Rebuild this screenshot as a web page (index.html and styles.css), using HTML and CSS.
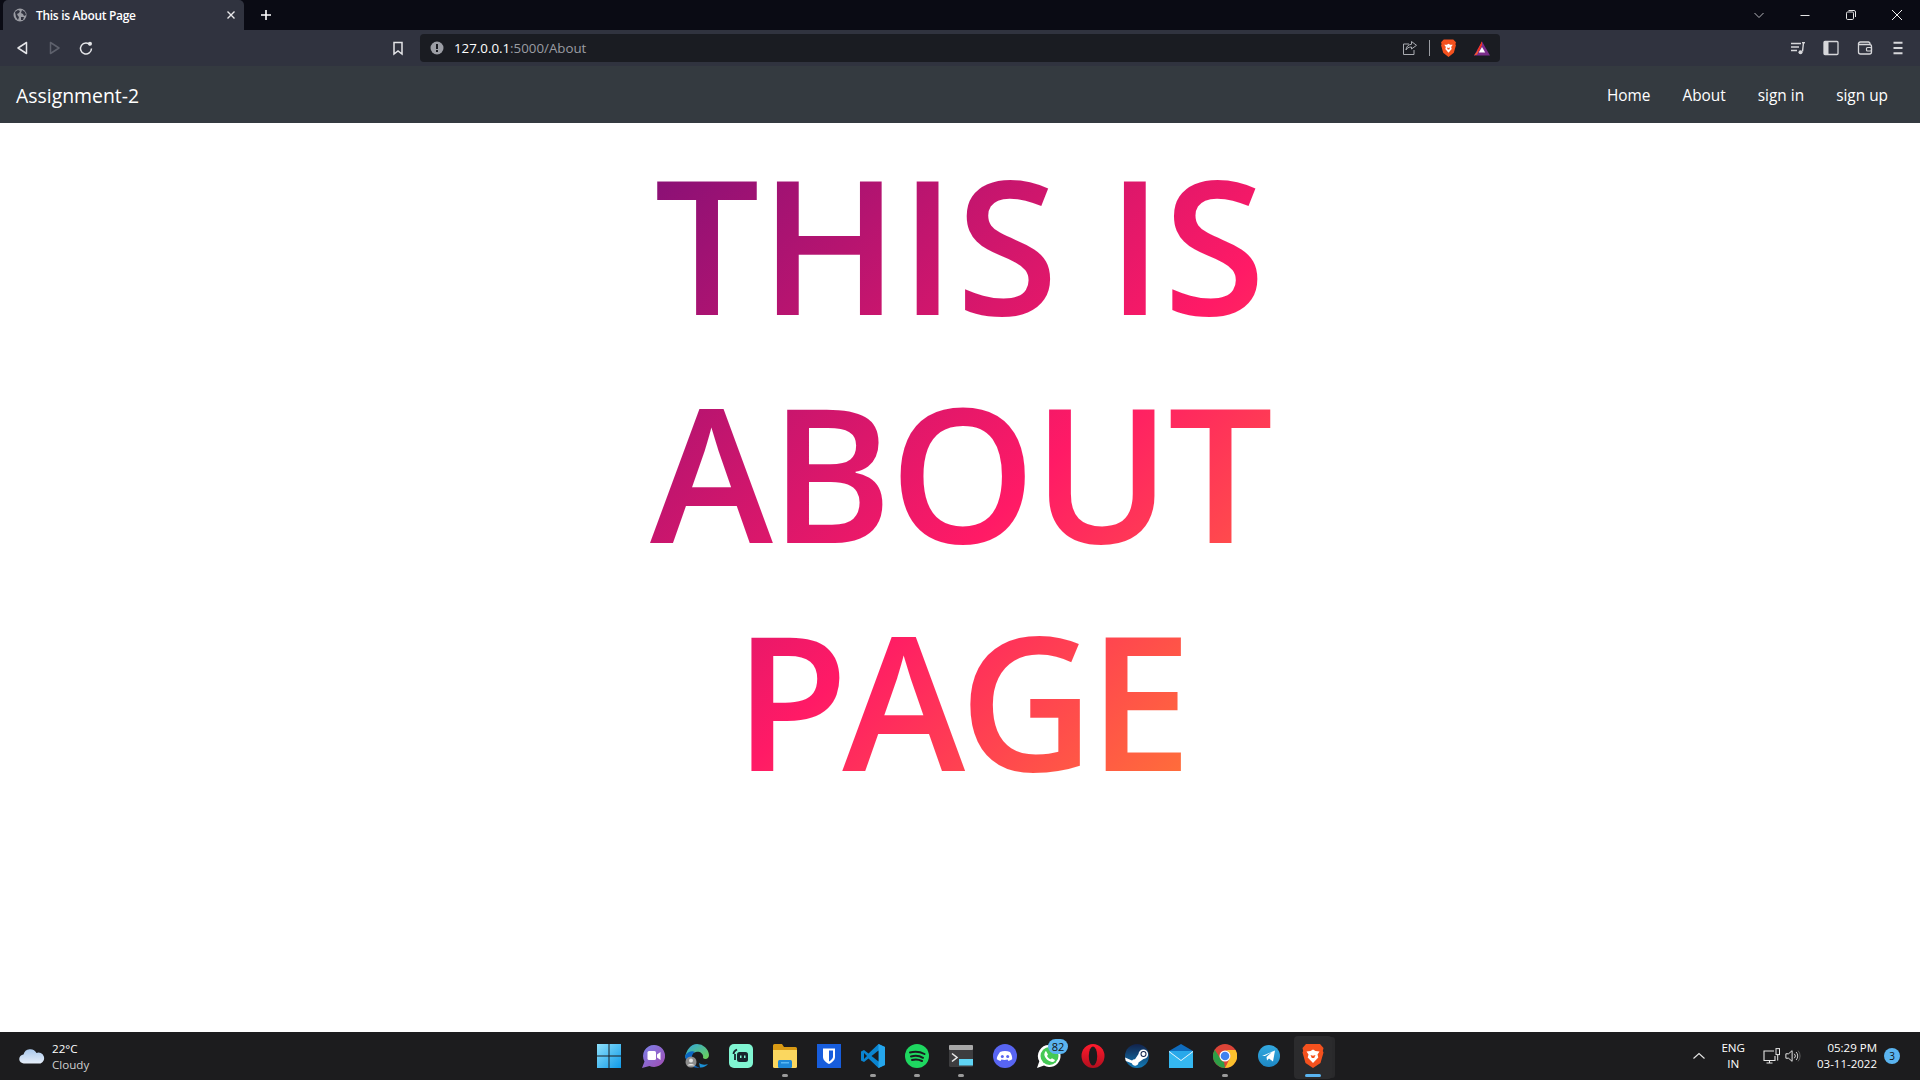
FILE: index.html
```html
<!DOCTYPE html>
<html lang="en">
<head>
<meta charset="utf-8">
<title>This is About Page</title>
<link rel="stylesheet" href="styles.css">
</head>
<body>
<header class="tabstrip">
  <div class="tab">
    <svg class="tab-globe" viewBox="0 0 14 14"><circle cx="7" cy="7" r="6.500" fill="#9a9ca3"/><path d="M2 4l3-2 2 1-1 2-2 1 1 2 1 1-1 3-2-3zM9 2l3 2 1 3-2 1-1-2-2-1zM8 9l3 0-1 3-2 0z" fill="#30333f"/></svg>
    <span class="tab-title">This is About Page</span>
    <svg class="tab-close" viewBox="0 0 10 10"><path d="M1.500 1.500l7 7M8.500 1.500l-7 7" stroke="#e8e8ea" stroke-width="1.400"/></svg>
  </div>
  <svg class="tab-new" viewBox="0 0 12 12"><path d="M6 1v10M1 6h10" stroke="#fff" stroke-width="1.600"/></svg>
  <div class="win-controls">
    <svg class="win-icon chev" viewBox="0 0 12 12"><path d="M1.500 4l4.500 4.500L10.500 4" fill="none" stroke="#b5b6bb"/></svg>
    <svg class="win-icon" viewBox="0 0 12 12"><path d="M1.500 6.500h9" stroke="#e5e5e5" stroke-width="1"/></svg>
    <svg class="win-icon" viewBox="0 0 12 12"><rect x="1.500" y="3" width="7" height="7.500" rx="1.200" fill="none" stroke="#e5e5e5"/><path d="M3.500 1.500h5.500a1.500 1.500 0 0 1 1.500 1.500v5" fill="none" stroke="#e5e5e5"/></svg>
    <svg class="win-icon" viewBox="0 0 12 12"><path d="M1 1l10 10M11 1L1 11" stroke="#f0f0f0"/></svg>
  </div>
</header>

<div class="toolbar">
  <svg class="tool-icon back" viewBox="0 0 16 16"><path d="M11.500 2.500v11L3 8z" fill="none" stroke="#e4e5e8" stroke-width="1.500" stroke-linejoin="round"/></svg>
  <svg class="tool-icon fwd" viewBox="0 0 16 16"><path d="M4.500 2.500v11L13 8z" fill="none" stroke="#5e616c" stroke-width="1.500" stroke-linejoin="round"/></svg>
  <svg class="tool-icon reload" viewBox="0 0 16 16"><path d="M12.300 5A5.500 5.500 0 1 0 13.500 8.500" fill="none" stroke="#e4e5e8" stroke-width="1.500"/><circle cx="12" cy="3.800" r="2" fill="#e4e5e8"/></svg>
  <svg class="tool-icon bookmark" viewBox="0 0 16 16"><path d="M4 2.500h8v11.500l-4-3-4 3z" fill="none" stroke="#e4e5e8" stroke-width="1.500"/></svg>
  <div class="omnibox">
    <svg class="alert" viewBox="0 0 14 14"><circle cx="7" cy="7" r="6.500" fill="#9c9ea5"/><rect x="6" y="3" width="2" height="5" fill="#1a1c22"/><rect x="6" y="9" width="2" height="2" fill="#1a1c22"/></svg>
    <span class="url"><b>127.0.0.1</b>:5000/About</span>
    <svg class="share" viewBox="0 0 16 16"><path d="M7 4H1.500v10.500H12V10" fill="none" stroke="#a9abb1"/><path d="M9.500 1.500l5 3.800-5 3.700V7c-3 0-4.500 1-5.500 3 .2-3.500 2.500-5.500 5.500-5.700z" fill="none" stroke="#a9abb1"/></svg>
    <i class="sep"></i>
    <svg class="brave" viewBox="0 0 16 18"><path d="M3.500 1h9l2.500 2.500-.5 2 .5 1-2 7L8 17.500 3 13.500 1 6.500l.5-1L1 3.500z" fill="#f4511e"/><path d="M4 6l2.500 0L8 5l1.500 1L12 6l-1.500 2 .5 2-3 3.500L5 10l.5-2z" fill="#fff"/><path d="M6.500 8.500l1.500.5 1.500-.5L8.700 10.500h-1.400z" fill="#f4511e"/></svg>
    <svg class="bat" viewBox="0 0 16 14"><path d="M8 0l8 14H0z" fill="#7b2d8b"/><path d="M8 0L3.500 9.500 0 14l3-1 5-10z" fill="#ff5a22"/><path d="M8 0l-5 9.500h2L8 3z" fill="#f4331c"/><path d="M8 5.500L4.800 11h6.400z" fill="#fff"/></svg>
  </div>
  <div class="tool-right">
    <svg class="tool-icon" viewBox="0 0 16 16"><path d="M1 3.500h10M1 7h8M1 10.500h6" stroke="#d6d7da" stroke-width="1.400"/><path d="M13.500 2.500l-1 9" stroke="#d6d7da" stroke-width="1.400"/><path d="M12 2.700h3" stroke="#d6d7da" stroke-width="1.400"/><circle cx="10.500" cy="12.200" r="2" fill="#d6d7da"/></svg>
    <svg class="tool-icon" viewBox="0 0 16 16"><rect x="1" y="1.500" width="14" height="13" rx="1" fill="none" stroke="#d6d7da" stroke-width="1.300"/><rect x="1" y="1.500" width="4.500" height="13" fill="#d6d7da"/></svg>
    <svg class="tool-icon" viewBox="0 0 16 16"><path d="M1.500 4.500V12a2 2 0 0 0 2 2h9a2 2 0 0 0 2-2V6.500a2 2 0 0 0-2-2h-11zM1.500 4.500a2 2 0 0 1 2-2.500h8a2 2 0 0 1 1.500 2.500" fill="none" stroke="#d6d7da" stroke-width="1.300"/><rect x="9.500" y="7.500" width="5" height="3.500" rx="1" fill="none" stroke="#d6d7da" stroke-width="1.200"/></svg>
    <svg class="tool-icon" viewBox="0 0 16 16"><path d="M3.500 2.800h9M3.500 8h9M3.500 13.200h9" stroke="#d6d7da" stroke-width="2"/></svg>
  </div>
</div>

<nav class="navbar">
  <a class="brand">Assignment-2</a>
  <ul class="nav-links">
    <li>Home</li>
    <li>About</li>
    <li>sign in</li>
    <li>sign up</li>
  </ul>
</nav>

<main class="page">
  <h1 class="headline"><span class="line line-a">THIS IS</span> <span class="line line-b">ABOUT</span> <span class="line line-c">PAGE</span></h1>
</main>

<footer class="taskbar">
  <div class="weather">
    <svg class="cloud" viewBox="0 0 26 18"><defs><linearGradient id="cl" x1="0" y1="0" x2="0" y2="1"><stop offset="0" stop-color="#a9c8ec"/><stop offset="1" stop-color="#e6eef9"/></linearGradient></defs><path d="M5 16.500a4.500 4.500 0 0 1-.5-9A7 7 0 0 1 17.500 6a5.300 5.300 0 0 1 4 10.500z" fill="url(#cl)"/></svg>
    <div class="weather-text"><span class="temp">22°C</span><span class="cond">Cloudy</span></div>
  </div>

  <div class="apps">
    <div class="app"><svg viewBox="0 0 24 24"><defs><linearGradient id="win" x1="0" y1="0" x2="1" y2="1"><stop offset="0" stop-color="#8ee0fb"/><stop offset="1" stop-color="#0f9ae8"/></linearGradient></defs><path d="M0 0h11.500v11.500H0zM12.500 0H24v11.500H12.500zM0 12.500h11.500V24H0zM12.500 12.500H24V24H12.500z" fill="url(#win)"/></svg></div>
    <div class="app"><svg viewBox="0 0 24 24"><defs><linearGradient id="chat" x1="0" y1="0" x2="1" y2="1"><stop offset="0" stop-color="#7b83eb"/><stop offset="1" stop-color="#a24bb0"/></linearGradient></defs><path d="M13 1a11 11 0 1 1-4.500 21L1 24l2.500-6.500A11 11 0 0 1 13 1z" fill="url(#chat)"/><rect x="6.500" y="7" width="8.500" height="9" rx="1.500" fill="#fff"/><path d="M16 10.500l3.500-2.500v8l-3.500-2.500z" fill="#fff"/></svg></div>
    <div class="app"><svg viewBox="0 0 24 24"><defs><linearGradient id="edge1" x1="0" y1="0" x2="1" y2="1"><stop offset="0" stop-color="#2fa5e0"/><stop offset="1" stop-color="#6fd24f"/></linearGradient></defs><path d="M12 0a12 12 0 0 1 12 11c0 4-4 5-6 3 1-4-3-7-7-6-4 1-8 4-11 6C1 6 6 0 12 0z" fill="url(#edge1)"/><path d="M0 12c2-4 7-6 10-4-2 1-4 4-3 8 .7 4 4 7 8 7.500C8 25 1 20 0 12z" fill="#0b66c2"/><path d="M15 23.500c3 .5 6-1 8-3.500-3 1-6 1-9-1z" fill="#1a8fd6"/><circle cx="6" cy="18" r="5.500" fill="#8d8d8d"/><circle cx="6" cy="16.500" r="2" fill="#e2e2e2"/><path d="M2.500 21.500c.7-2 6.300-2 7 0z" fill="#e2e2e2"/></svg></div>
    <div class="app"><svg viewBox="0 0 24 24"><rect width="24" height="24" rx="5" fill="#80f5d2"/><rect x="8" y="8" width="11" height="10" rx="2.500" fill="#17242d"/><path d="M4.500 10c0-2 1.500-3.500 3.500-4.500" fill="none" stroke="#17242d" stroke-width="1.800"/><path d="M6 10v6" stroke="#17242d" stroke-width="1.800"/><rect x="11" y="11.500" width="1.500" height="2.500" fill="#80f5d2"/><rect x="15" y="11.500" width="1.500" height="2.500" fill="#80f5d2"/></svg></div>
    <div class="app running"><svg viewBox="0 0 24 24"><path d="M0 1.500A1.500 1.500 0 0 1 1.500 0H9l2 3h11.500A1.500 1.500 0 0 1 24 4.500V8H0z" fill="#d99a14"/><path d="M0 6h24v16.500a1.500 1.500 0 0 1-1.500 1.500h-21A1.500 1.500 0 0 1 0 22.500z" fill="#fbd75f"/><rect x="5" y="16" width="14" height="8" rx="1.500" fill="#1e88d6"/><rect x="8" y="18" width="8" height="1.500" fill="#57b7f2"/></svg></div>
    <div class="app"><svg viewBox="0 0 24 24"><rect width="24" height="24" fill="#175ddc"/><path d="M6 4.500h12v8.500c0 3-3 5.500-6 7-3-1.500-6-4-6-7z" fill="#fff"/><path d="M12 6.500h4v6.300c0 1.800-2 3.400-4 4.600z" fill="#175ddc"/></svg></div>
    <div class="app running"><svg viewBox="0 0 24 24"><path d="M17.500 0L24 3v18l-6.500 3L7.500 14.500 3 18l-3-1.500v-9L3 6l4.500 3.500z" fill="#0a84d0"/><path d="M17.500 0L24 3v18l-6.500 3z" fill="#25a6ec"/><path d="M17.500 6.500v11L10.500 12z" fill="#1a1c1f"/><path d="M3 9l3 3-3 3z" fill="#1a1c1f"/></svg></div>
    <div class="app running"><svg viewBox="0 0 24 24"><circle cx="12" cy="12" r="12" fill="#1ed760"/><path d="M5 8.500c5-1.500 10-1 14.500 1.500M6 12.500c4-1.200 8.500-.8 12 1.300M7 16c3.300-1 7-.6 10 1" fill="none" stroke="#1a1c1f" stroke-width="2" stroke-linecap="round"/></svg></div>
    <div class="app running"><svg viewBox="0 0 24 24"><rect y="1" width="24" height="22" rx="1.500" fill="#3d3d3f"/><rect y="1" width="24" height="5" rx="1" fill="#a8a8a8"/><path d="M3 9.500l5 4-5 4" fill="none" stroke="#e8e8e8" stroke-width="1.600"/><rect x="10" y="15" width="14" height="6.500" fill="#5fd4f4"/></svg></div>
    <div class="app"><svg viewBox="0 0 24 24"><circle cx="12" cy="12" r="12" fill="#5865f2"/><path d="M7 8c3.200-1.300 6.800-1.300 10 0 1.500 2.200 2.300 4.700 2.200 7.300-1.200.9-2.400 1.400-3.700 1.700l-.9-1.500c-2 .6-4.200.6-6.200 0L7.500 17c-1.300-.3-2.500-.8-3.700-1.700C3.700 12.700 5.500 10.200 7 8z" fill="#fff"/><circle cx="9.300" cy="12.500" r="1.500" fill="#5865f2"/><circle cx="14.700" cy="12.500" r="1.500" fill="#5865f2"/></svg></div>
    <div class="app"><svg viewBox="0 0 24 24"><path d="M12.500 1a11 11 0 1 1-5.500 20.500L0 24l2.300-6.700A11 11 0 0 1 12.500 1z" fill="#fff"/><circle cx="12.500" cy="12" r="9" fill="#45c955"/><path d="M9 7l2 3.500-1 1.500c.7 1.500 2 2.700 3.500 3.300l1.500-1 3 1.800c-.4 1.400-1.600 2-3 1.800-4-.6-7-3.800-7.700-7.200C7.500 9 8 7.500 9 7z" fill="#fff"/></svg><span class="badge">82</span></div>
    <div class="app"><svg viewBox="0 0 24 24"><defs><linearGradient id="op" x1="0" y1="0" x2="0" y2="1"><stop offset="0" stop-color="#ff1b2d"/><stop offset="1" stop-color="#b20f1e"/></linearGradient></defs><ellipse cx="12" cy="12" rx="11.500" ry="12" fill="url(#op)"/><ellipse cx="12" cy="12" rx="4.200" ry="9.500" fill="#1c1c1e"/></svg></div>
    <div class="app"><svg viewBox="0 0 24 24"><defs><linearGradient id="st" x1="0" y1="0" x2="0" y2="1"><stop offset="0" stop-color="#12224a"/><stop offset="1" stop-color="#1279b4"/></linearGradient></defs><circle cx="12" cy="12" r="12" fill="url(#st)"/><path d="M0 13.500l7 3c1 -1 2 -1.300 3 -1.200L13.500 10a4.800 4.800 0 1 1 5 5l-5 3.500a3.500 3.500 0 0 1-6.800 .8L.8 17z" fill="#fff"/><circle cx="18.500" cy="10" r="3" fill="#12224a"/><circle cx="18.500" cy="10" r="2" fill="#fff"/></svg></div>
    <div class="app"><svg viewBox="0 0 24 24"><path d="M12 0l12 7v2H0V7z" fill="#0f6cbd"/><rect y="7" width="24" height="17" fill="#28a8ea"/><path d="M0 7l12 9 12-9v2L12 18 0 9z" fill="#e9f6fd"/><path d="M0 8l12 9 12-9v16H0z" fill="#35b8f1"/></svg></div>
    <div class="app running"><svg viewBox="0 0 24 24"><circle cx="12" cy="12" r="12" fill="#db4437"/><path d="M12 6h10.500A12 12 0 0 1 12 24L17 14a6 6 0 0 0-5-8z" fill="#fbc02d"/><path d="M12 24A12 12 0 0 1 1.800 5.700L7 14a6 6 0 0 0 4 4z" fill="#2e9e47"/><circle cx="12" cy="12" r="5.500" fill="#fff"/><circle cx="12" cy="12" r="4.300" fill="#3f82f0"/></svg></div>
    <div class="app"><svg viewBox="0 0 24 24"><defs><linearGradient id="tg" x1="0" y1="0" x2="0" y2="1"><stop offset="0" stop-color="#33a9e0"/><stop offset="1" stop-color="#1d87c4"/></linearGradient></defs><circle cx="12" cy="12" r="11" fill="url(#tg)"/><path d="M5 12l13-5.500-2 11-4-3-2 2-.5-3.500 5.500-5-7 4z" fill="#fff"/></svg></div>
    <div class="app active"><svg viewBox="0 0 24 24"><path d="M5 0h14l3.500 4-.7 3 .7 1.500-3 10.500L12 24 4.500 19 1.500 8.500 2.200 7 1.500 4z" fill="#f4511e"/><path d="M5.500 7.500L9.500 7 12 5.500 14.500 7l4 .5-2 3 .8 3-5.300 5.500L6.700 13.500l.8-3z" fill="#fff"/><path d="M9.500 11l2.500.8 2.500-.8-1.300 3h-2.400z" fill="#f4511e"/></svg></div>
  </div>

  <div class="tray">
    <svg class="tray-chev" viewBox="0 0 14 10"><path d="M1.500 7.500L7 2.500l5.500 5" fill="none" stroke="#e6e6e6" stroke-width="1.100"/></svg>
    <div class="lang"><span>ENG</span><span>IN</span></div>
    <svg class="tray-net" viewBox="0 0 18 16"><path d="M11 3H1v9.500h11V8M6.500 12.500V15M3.500 15h6" fill="none" stroke="#e6e6e6" stroke-width="1.100"/><rect x="13" y=".6" width="3.500" height="6" fill="none" stroke="#e6e6e6"/><path d="M14.700 6.600v6" stroke="#e6e6e6"/></svg>
    <svg class="tray-vol" viewBox="0 0 18 16"><path d="M1 5.500h3l4-3.500v12l-4-3.500H1z" fill="none" stroke="#e6e6e6" stroke-width="1.100"/><path d="M10.500 5.500a3.500 3.500 0 0 1 0 5M12.500 3.500a6.500 6.500 0 0 1 0 9" fill="none" stroke="#e6e6e6"/><path d="M14.700 2a9 9 0 0 1 0 12" fill="none" stroke="#666"/></svg>
    <div class="clock"><span>05:29 PM</span><span>03-11-2022</span></div>
    <span class="notif">3</span>
  </div>
</footer>
</body>
</html>
```
FILE: styles.css
```css
* { box-sizing: border-box; }
html, body { height: 100%; }
body {
  margin: 0;
  height: 100vh;
  display: flex;
  flex-direction: column;
  overflow: hidden;
  background: #fff;
  font-family: "Open Sans", "Noto Sans", sans-serif;
  color: #fff;
}
svg { display: block; flex: none; }

/* tab strip */
.tabstrip {
  height: 30px;
  flex: none;
  display: flex;
  align-items: flex-end;
  padding-left: 3px;
  background: #0a0b14;
}
.tab {
  width: 241px;
  height: 30px;
  display: flex;
  align-items: center;
  padding: 0 8px 0 10px;
  background: #30333f;
  border-radius: 5px 5px 0 0;
}
.tab-globe { width: 14px; height: 14px; }
.tab-title {
  flex: 1;
  margin-left: 9px;
  font-size: 12px;
  font-weight: 600;
  letter-spacing: -0.3px;
  white-space: nowrap;
}
.tab-close { width: 10px; height: 10px; }
.tab-new { width: 12px; height: 12px; margin: 0 0 9px 16px; }
.win-controls {
  margin-left: auto;
  height: 30px;
  display: flex;
  align-items: center;
  gap: 34px;
  padding-right: 17px;
}
.win-icon { width: 12px; height: 12px; }

/* toolbar */
.toolbar {
  height: 36px;
  flex: none;
  display: flex;
  align-items: center;
  padding-left: 15px;
  background: #30333f;
}
.tool-icon { width: 16px; height: 16px; }
.fwd { margin-left: 15px; }
.reload { margin-left: 16px; }
.bookmark { margin-left: 296px; }
.omnibox {
  width: 1080px;
  height: 28px;
  margin-left: 14px;
  display: flex;
  align-items: center;
  padding: 0 10px;
  background: #1a1c22;
  border-radius: 4px;
}
.alert { width: 14px; height: 14px; }
.url {
  flex: 1;
  margin-left: 10px;
  font-size: 13.300px;
  color: #9b9da3;
}
.url b { font-weight: 400; color: #fff; }
.share { width: 16px; height: 16px; }
.sep { width: 1px; height: 16px; margin-left: 11px; background: #9b9da3; }
.brave { width: 17px; height: 20px; margin-left: 10px; }
.bat { width: 16px; height: 15px; margin-left: 17.500px; }
.tool-right {
  margin-left: auto;
  display: flex;
  align-items: center;
  gap: 17.500px;
  padding-right: 14px;
}

/* site navbar */
.navbar {
  height: 57px;
  flex: none;
  display: flex;
  align-items: center;
  justify-content: space-between;
  padding: 0 32px 0 16px;
  background: #343a40;
}
.brand { font-size: 19.400px; padding-top: 1px; }
.nav-links {
  display: flex;
  gap: 32px;
  margin: 0;
  padding: 1px 0 0;
  list-style: none;
  font-size: 15.400px;
}

/* page */
.page {
  flex: 1;
  min-height: 0;
  display: flex;
  justify-content: center;
  align-items: flex-start;
  padding-top: 6px;
}
.headline {
  width: 700px;
  margin: 0;
  font-size: 186px;
  font-weight: 600;
  line-height: 228px;
  text-align: center;
  color: transparent;
  background: linear-gradient(135deg, #7a0f78 0%, #ff1a66 56%, #ff8c2a 100%);
  -webkit-background-clip: text;
  background-clip: text;
}
.line { display: block; white-space: nowrap; }
.line-a { letter-spacing: 0; }
.line-b { letter-spacing: -3px; }
.line-c { letter-spacing: -6px; }

/* taskbar */
.taskbar {
  position: relative;
  height: 48px;
  flex: none;
  display: flex;
  align-items: center;
  justify-content: space-between;
  background: #1c1c1e;
}
.weather {
  width: 400px;
  display: flex;
  align-items: center;
  gap: 7px;
  padding-left: 19px;
}
.cloud { width: 26px; height: 18px; }
.weather-text, .lang, .clock {
  display: flex;
  flex-direction: column;
  font-size: 11.600px;
  line-height: 16px;
}
.weather-text { margin-top: 2px; }
.cond { color: #d0d0d0; }
.apps {
  display: flex;
  margin-left: 2px;
}
.app {
  position: relative;
  width: 44px;
  height: 48px;
  display: flex;
  align-items: center;
  justify-content: center;
}
.app svg { width: 24px; height: 24px; }
.running::after, .active::after {
  content: "";
  position: absolute;
  left: 19px;
  bottom: 3px;
  width: 6px;
  height: 3px;
  border-radius: 2px;
  background: #9a9a9a;
}
.active::before {
  content: "";
  position: absolute;
  inset: 4px 3px 1px;
  border-radius: 4px;
  background: #2b2b2d;
  box-shadow: 4px 0 0 -1px #29292b;
}
.active svg { position: relative; }
.active::after {
  left: 14px;
  width: 16px;
  background: #5ab4f0;
}
.badge {
  position: absolute;
  left: 21px;
  top: 7px;
  width: 20px;
  height: 15px;
  border-radius: 8px;
  background: #5ab4f0;
  color: #111;
  font-size: 11px;
  line-height: 15px;
  text-align: center;
}
.tray {
  width: 400px;
  display: flex;
  align-items: center;
  justify-content: flex-end;
  padding-right: 20px;
}
.tray-chev { width: 14px; height: 10px; margin-right: 15px; }
.lang { align-items: center; font-weight: 500; margin-right: 18px; }
.tray-net { width: 18px; height: 16px; margin-right: 4px; }
.tray-vol { width: 16px; height: 16px; margin-right: 16px; }
.clock { align-items: flex-end; margin-right: 7px; white-space: nowrap; font-size: 11.500px; }
.notif {
  width: 16px;
  height: 16px;
  flex: none;
  border-radius: 50%;
  background: #5ab4f0;
  color: #111;
  font-size: 10px;
  line-height: 16px;
  text-align: center;
}
```
